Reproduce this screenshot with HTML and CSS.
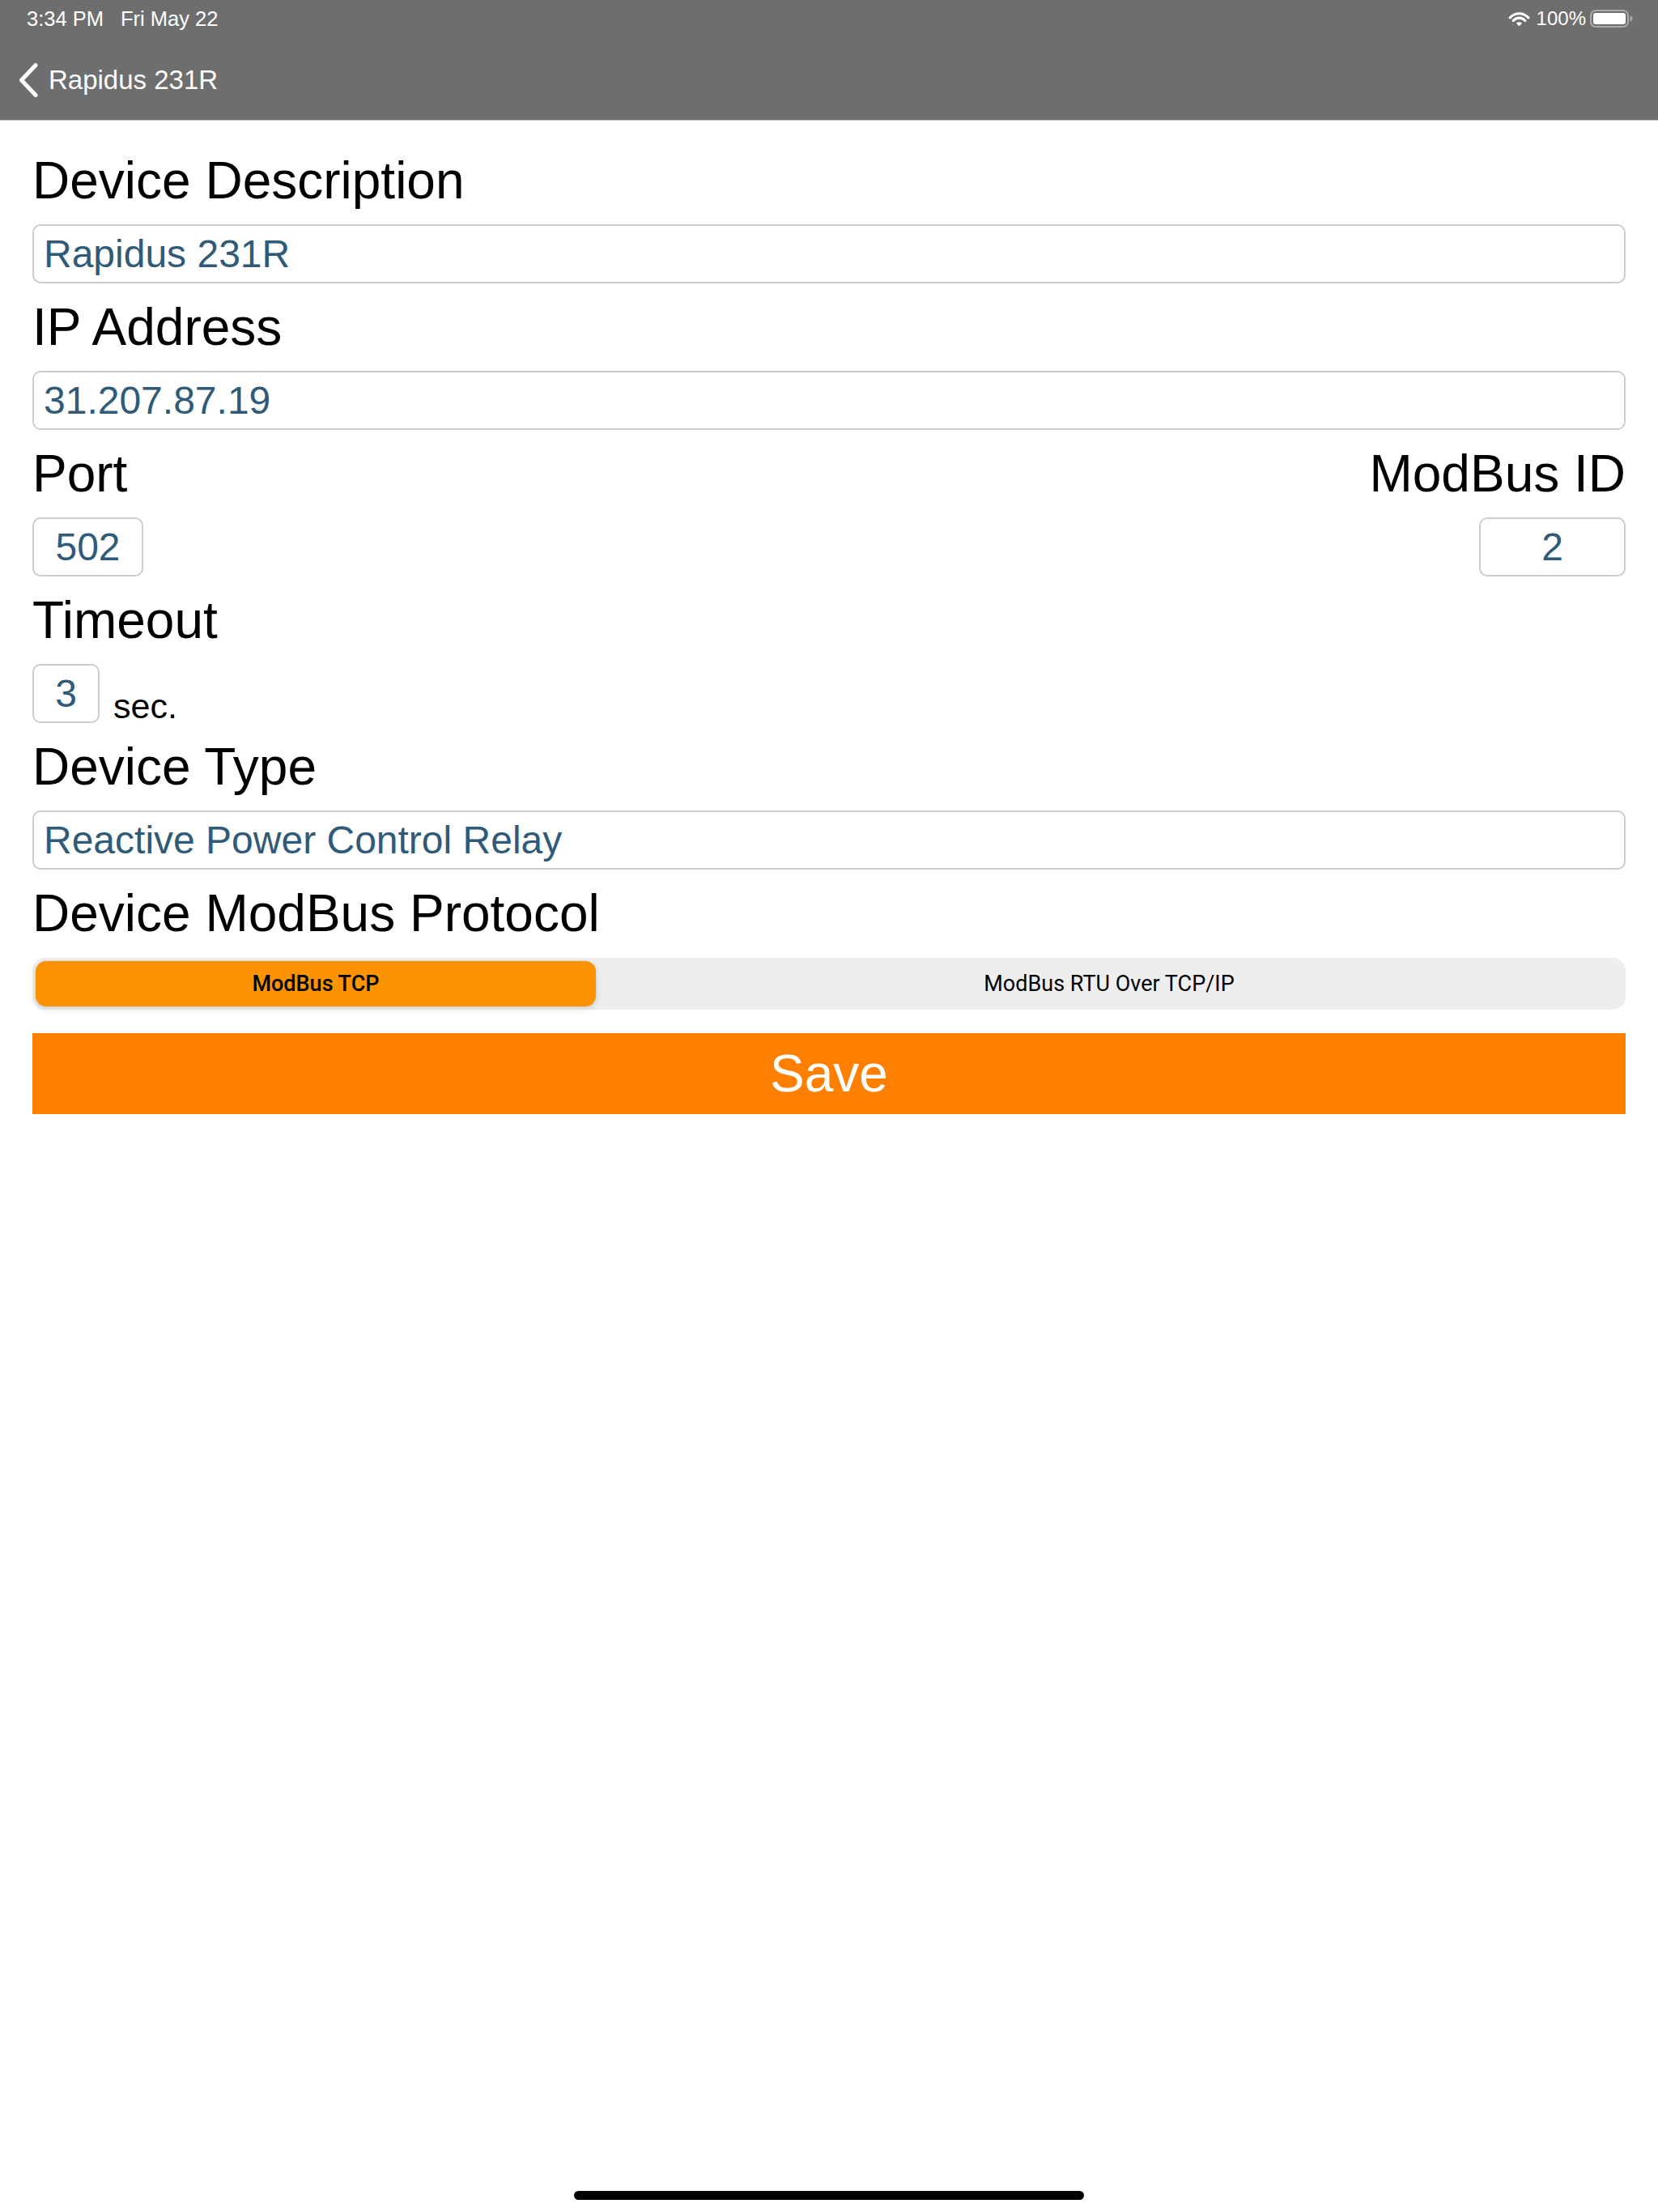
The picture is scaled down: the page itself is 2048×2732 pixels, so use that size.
FILE: index.html
```html
<!DOCTYPE html>
<html lang="en">
<head>
<meta charset="utf-8">
<title>Rapidus 231R</title>
<link rel="stylesheet" href="styles.css">
</head>
<body>
<div class="screen">
  <header class="topbar">
    <div class="status">
      <div class="status-left"><span>3:34 PM</span><span class="date">Fri May 22</span></div>
      <div class="status-right">
        <svg class="wifi" width="27" height="19" viewBox="0 0 27 19">
          <path d="M2.2,7.9 A15,15 0 0,1 24.8,7.9" fill="none" stroke="#fff" stroke-width="3.2" stroke-linecap="round"/>
          <path d="M6.2,11.6 A9.5,9.5 0 0,1 20.8,11.6" fill="none" stroke="#fff" stroke-width="3.2" stroke-linecap="round"/>
          <path d="M13.5,18.6 L10,14.8 A5,5 0 0,1 17,14.8 Z" fill="#fff"/>
        </svg>
        <span class="pct">100%</span>
        <svg class="battery" width="54" height="22" viewBox="0 0 54 22">
          <rect x="1" y="1" width="46" height="20" rx="6" fill="none" stroke="rgba(255,255,255,0.42)" stroke-width="2"/>
          <rect x="4" y="4" width="40" height="14" rx="3" fill="#fff"/>
          <path d="M49.5,8 h1 a2,2 0 0 1 2,2 v2 a2,2 0 0 1 -2,2 h-1 Z" fill="rgba(255,255,255,0.42)"/>
        </svg>
      </div>
    </div>
    <div class="navrow">
      <svg class="chev" width="28" height="44" viewBox="0 0 28 44">
        <polyline points="23,3.5 5.5,22 23,40.5" fill="none" stroke="#fff" stroke-width="5" stroke-linecap="round" stroke-linejoin="round"/>
      </svg>
      <span class="navtitle">Rapidus 231R</span>
    </div>
  </header>

  <main class="form">
    <div class="label">Device Description</div>
    <div class="field">Rapidus 231R</div>

    <div class="label">IP Address</div>
    <div class="field">31.207.87.19</div>

    <div class="pair">
      <div class="col">
        <div class="label">Port</div>
        <div class="field num port">502</div>
      </div>
      <div class="col col-right">
        <div class="label">ModBus ID</div>
        <div class="field num modid">2</div>
      </div>
    </div>

    <div class="label">Timeout</div>
    <div class="timeout-row">
      <div class="field num timeout">3</div>
      <span class="unit">sec.</span>
    </div>

    <div class="label">Device Type</div>
    <div class="field">Reactive Power Control Relay</div>

    <div class="label">Device ModBus Protocol</div>
    <div class="segmented">
      <div class="seg seg-tcp seg-selected">ModBus TCP</div>
      <div class="seg seg-rtu">ModBus RTU Over TCP/IP</div>
    </div>

    <div class="save">Save</div>
  </main>

  <div class="home-indicator"></div>
</div>
</body>
</html>
```

FILE: styles.css
```css
* {
  box-sizing: border-box;
}

html,
body {
  margin: 0;
  padding: 0;
  background: #ffffff;
}

body {
  font-family: "Liberation Sans", Arial, Helvetica, sans-serif;
  color: #000;
}

.screen {
  position: relative;
  width: 2048px;
  height: 2732px;
  overflow: hidden;
  background: #ffffff;
}

/* ---------- top bar ---------- */
.topbar {
  background: #6e6e6e;
  border-bottom: 1px solid #c6c6c6;
  height: 149px;
  color: #fff;
}

.status {
  height: 46px;
  display: flex;
  align-items: center;
  justify-content: space-between;
  padding: 0 30px 0 33px;
  font-size: 25.5px;
}

.status-left .date {
  margin-left: 21px;
}

.status-right {
  display: flex;
  align-items: center;
  font-size: 24px;
}

.wifi {
  margin-right: 8px;
}

.pct {
  margin-right: 5px;
}

.navrow {
  height: 102px;
  display: flex;
  align-items: center;
  padding: 4px 0 0 21px;
}

.chev {
  display: block;
}

.navtitle {
  margin-left: 11px;
  font-size: 33px;
}

/* ---------- form ---------- */
.form {
  display: flex;
  flex-direction: column;
  gap: 18px;
  padding: 38px 40px 0 40px;
}

.label {
  font-size: 64px;
  line-height: 72px;
  color: #000;
}

.field {
  height: 73px;
  border: 2px solid #cdcdcd;
  border-radius: 10px;
  padding: 0 12px;
  font-size: 48px;
  line-height: 69px;
  color: #2f5b79;
  white-space: nowrap;
}

.field.num {
  text-align: center;
  padding: 0;
}

.port {
  width: 137px;
}

.modid {
  width: 181px;
}

.timeout {
  width: 83px;
}

.pair {
  display: flex;
  justify-content: space-between;
}

.col {
  display: flex;
  flex-direction: column;
  gap: 18px;
}

.col-right {
  align-items: flex-end;
}

.timeout-row {
  display: flex;
  align-items: flex-end;
}

.unit {
  font-size: 43px;
  line-height: 43px;
  margin-left: 17px;
  margin-bottom: -1px;
}

/* ---------- segmented control ---------- */
.segmented {
  height: 64px;
  margin-top: 1px;
  background: #eeeeef;
  border-radius: 16px;
  padding: 4px;
  display: flex;
}

.seg {
  height: 56px;
  display: flex;
  align-items: center;
  justify-content: center;
  font-size: 27px;
  color: #000;
  font-family: Roboto, "Liberation Sans", sans-serif;
}

.seg-tcp {
  width: 692px;
}

.seg-rtu {
  flex: 1;
}

.seg-selected {
  background: #fb9400;
  border-radius: 13px;
  box-shadow: 0 3px 8px rgba(0, 0, 0, 0.12), 0 0 0 1px rgba(0, 0, 0, 0.04);
  font-weight: 500;
}

/* ---------- save ---------- */
.save {
  margin-top: 11px;
  height: 100px;
  background: #ff8000;
  color: #ffffff;
  font-size: 64px;
  line-height: 100px;
  text-align: center;
}

/* ---------- home indicator ---------- */
.home-indicator {
  position: absolute;
  left: 709px;
  bottom: 15px;
  width: 630px;
  height: 11px;
  border-radius: 6px;
  background: #000;
}
```
